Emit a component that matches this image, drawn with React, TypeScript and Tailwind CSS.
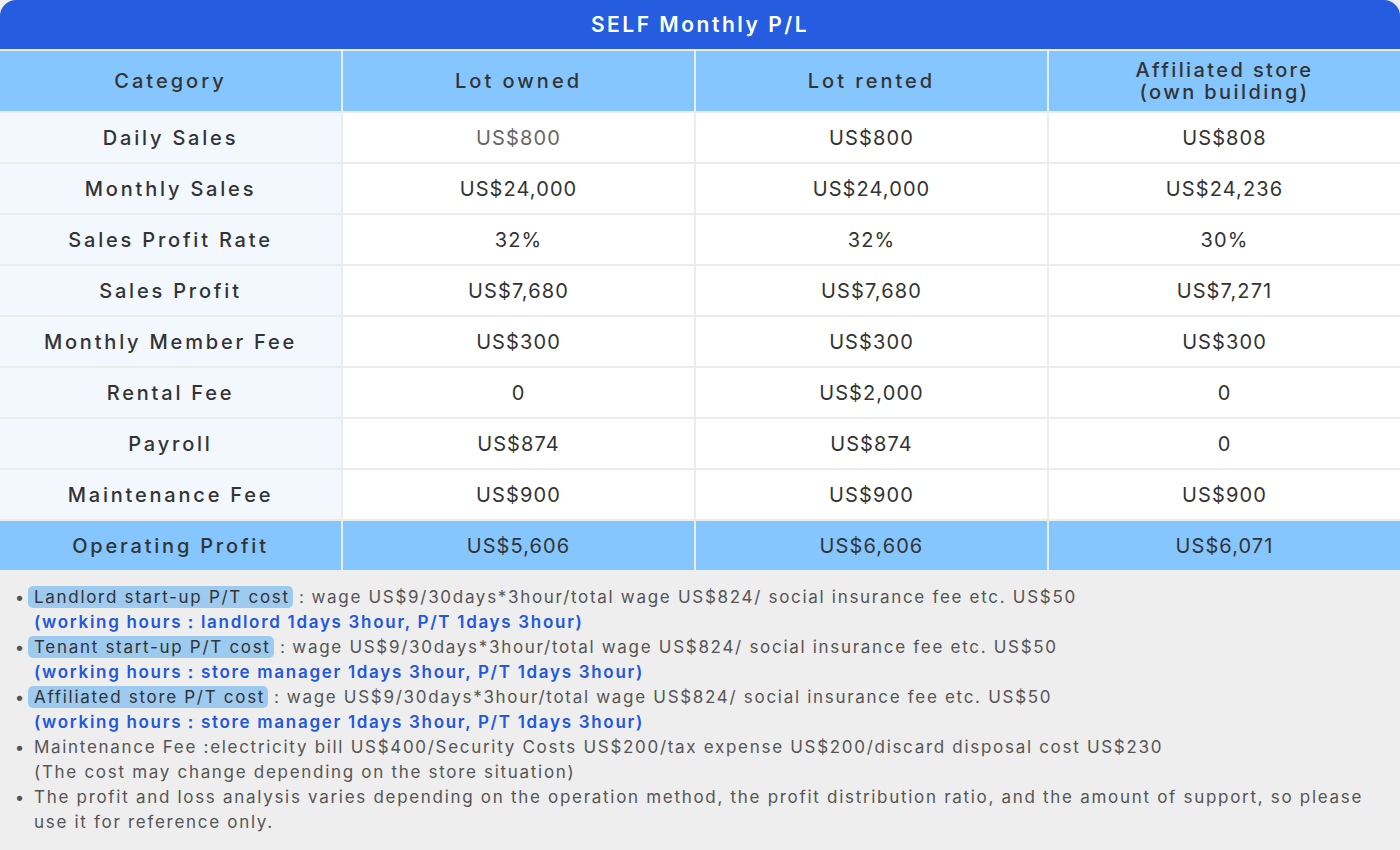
import React from 'react'

const font = { fontFamily: 'Inter, "Noto Sans", sans-serif' }

const rows: [string, string, string, string][] = [
  ['Daily Sales', 'US$800', 'US$800', 'US$808'],
  ['Monthly Sales', 'US$24,000', 'US$24,000', 'US$24,236'],
  ['Sales Profit Rate', '32%', '32%', '30%'],
  ['Sales Profit', 'US$7,680', 'US$7,680', 'US$7,271'],
  ['Monthly Member Fee', 'US$300', 'US$300', 'US$300'],
  ['Rental Fee', '0', 'US$2,000', '0'],
  ['Payroll', 'US$874', 'US$874', '0'],
  ['Maintenance Fee', 'US$900', 'US$900', 'US$900'],
]

const Bullet = ({ children }: { children: React.ReactNode }) => (
  <li className='flex'>
    <span className='w-[34px] shrink-0 text-right pr-[8px]'>•</span>
    <div>{children}</div>
  </li>
)

const Pill = ({ children }: { children: React.ReactNode }) => (
  <span className='bg-[#9dcaef] text-[#333] rounded-[5px] pl-[6px] pr-[3px] py-[1px] ml-[-6px]'>{children}</span>
)

const App = () => {
  return (
    <div className='w-[1400px] h-[850px] bg-[#eeeeee] overflow-hidden' style={font}>
      <div className='bg-[#255ce0] h-[49px] rounded-t-[16px] flex items-center justify-center text-white text-[21px] font-semibold tracking-[0.12em]'>
        SELF Monthly P/L
      </div>
      <div className='mt-[2px] grid grid-cols-[341px_1fr_1fr_1fr] gap-[2px] bg-[#ececec] text-[#333] text-[20px] tracking-[0.055em]'>
        <div className='h-[60px] bg-[#86c6fe] flex items-center justify-center font-medium tracking-[0.15em]'>Category</div>
        <div className='h-[60px] bg-[#86c6fe] flex items-center justify-center font-medium tracking-[0.15em]'>Lot owned</div>
        <div className='h-[60px] bg-[#86c6fe] flex items-center justify-center font-medium tracking-[0.15em]'>Lot rented</div>
        <div className='h-[60px] bg-[#86c6fe] flex flex-col items-center justify-center font-medium leading-[22px] tracking-[0.12em]'>
          <span>Affiliated store</span>
          <span>(own building)</span>
        </div>
        {rows.map((r, i) => (
          <React.Fragment key={r[0]}>
            <div className='h-[49px] bg-[#f2f8fe] flex items-center justify-center font-medium tracking-[0.14em]'>{r[0]}</div>
            <div className={`h-[49px] bg-white flex items-center justify-center ${i === 0 ? 'text-[#666]' : ''}`}>{r[1]}</div>
            <div className='h-[49px] bg-white flex items-center justify-center'>{r[2]}</div>
            <div className='h-[49px] bg-white flex items-center justify-center'>{r[3]}</div>
          </React.Fragment>
        ))}
        <div className='h-[49px] bg-[#86c6fe] flex items-center justify-center font-medium tracking-[0.14em]'>Operating Profit</div>
        <div className='h-[49px] bg-[#86c6fe] flex items-center justify-center'>US$5,606</div>
        <div className='h-[49px] bg-[#86c6fe] flex items-center justify-center'>US$6,606</div>
        <div className='h-[49px] bg-[#86c6fe] flex items-center justify-center'>US$6,071</div>
      </div>
      <ul className='pt-[15px] pr-[30px] text-[17px] leading-[25px] text-[#555] tracking-[0.1em]'>
        <Bullet>
          <Pill>Landlord start-up P/T cost</Pill>：wage US$9/30days*3hour/total wage US$824/ social insurance fee etc. US$50
          <div className='text-[#2357e0] font-semibold'>(working hours：landlord 1days 3hour, P/T 1days 3hour)</div>
        </Bullet>
        <Bullet>
          <Pill>Tenant start-up P/T cost</Pill>：wage US$9/30days*3hour/total wage US$824/ social insurance fee etc. US$50
          <div className='text-[#2357e0] font-semibold'>(working hours：store manager 1days 3hour, P/T 1days 3hour)</div>
        </Bullet>
        <Bullet>
          <Pill>Affiliated store P/T cost</Pill>：wage US$9/30days*3hour/total wage US$824/ social insurance fee etc. US$50
          <div className='text-[#2357e0] font-semibold'>(working hours：store manager 1days 3hour, P/T 1days 3hour)</div>
        </Bullet>
        <Bullet>
          Maintenance Fee :electricity bill US$400/Security Costs US$200/tax expense US$200/discard disposal cost US$230
          <div>(The cost may change depending on the store situation)</div>
        </Bullet>
        <Bullet>
          The profit and loss analysis varies depending on the operation method, the profit distribution ratio, and the amount of support, so please use it for reference only.
        </Bullet>
      </ul>
    </div>
  )
}

export default App
